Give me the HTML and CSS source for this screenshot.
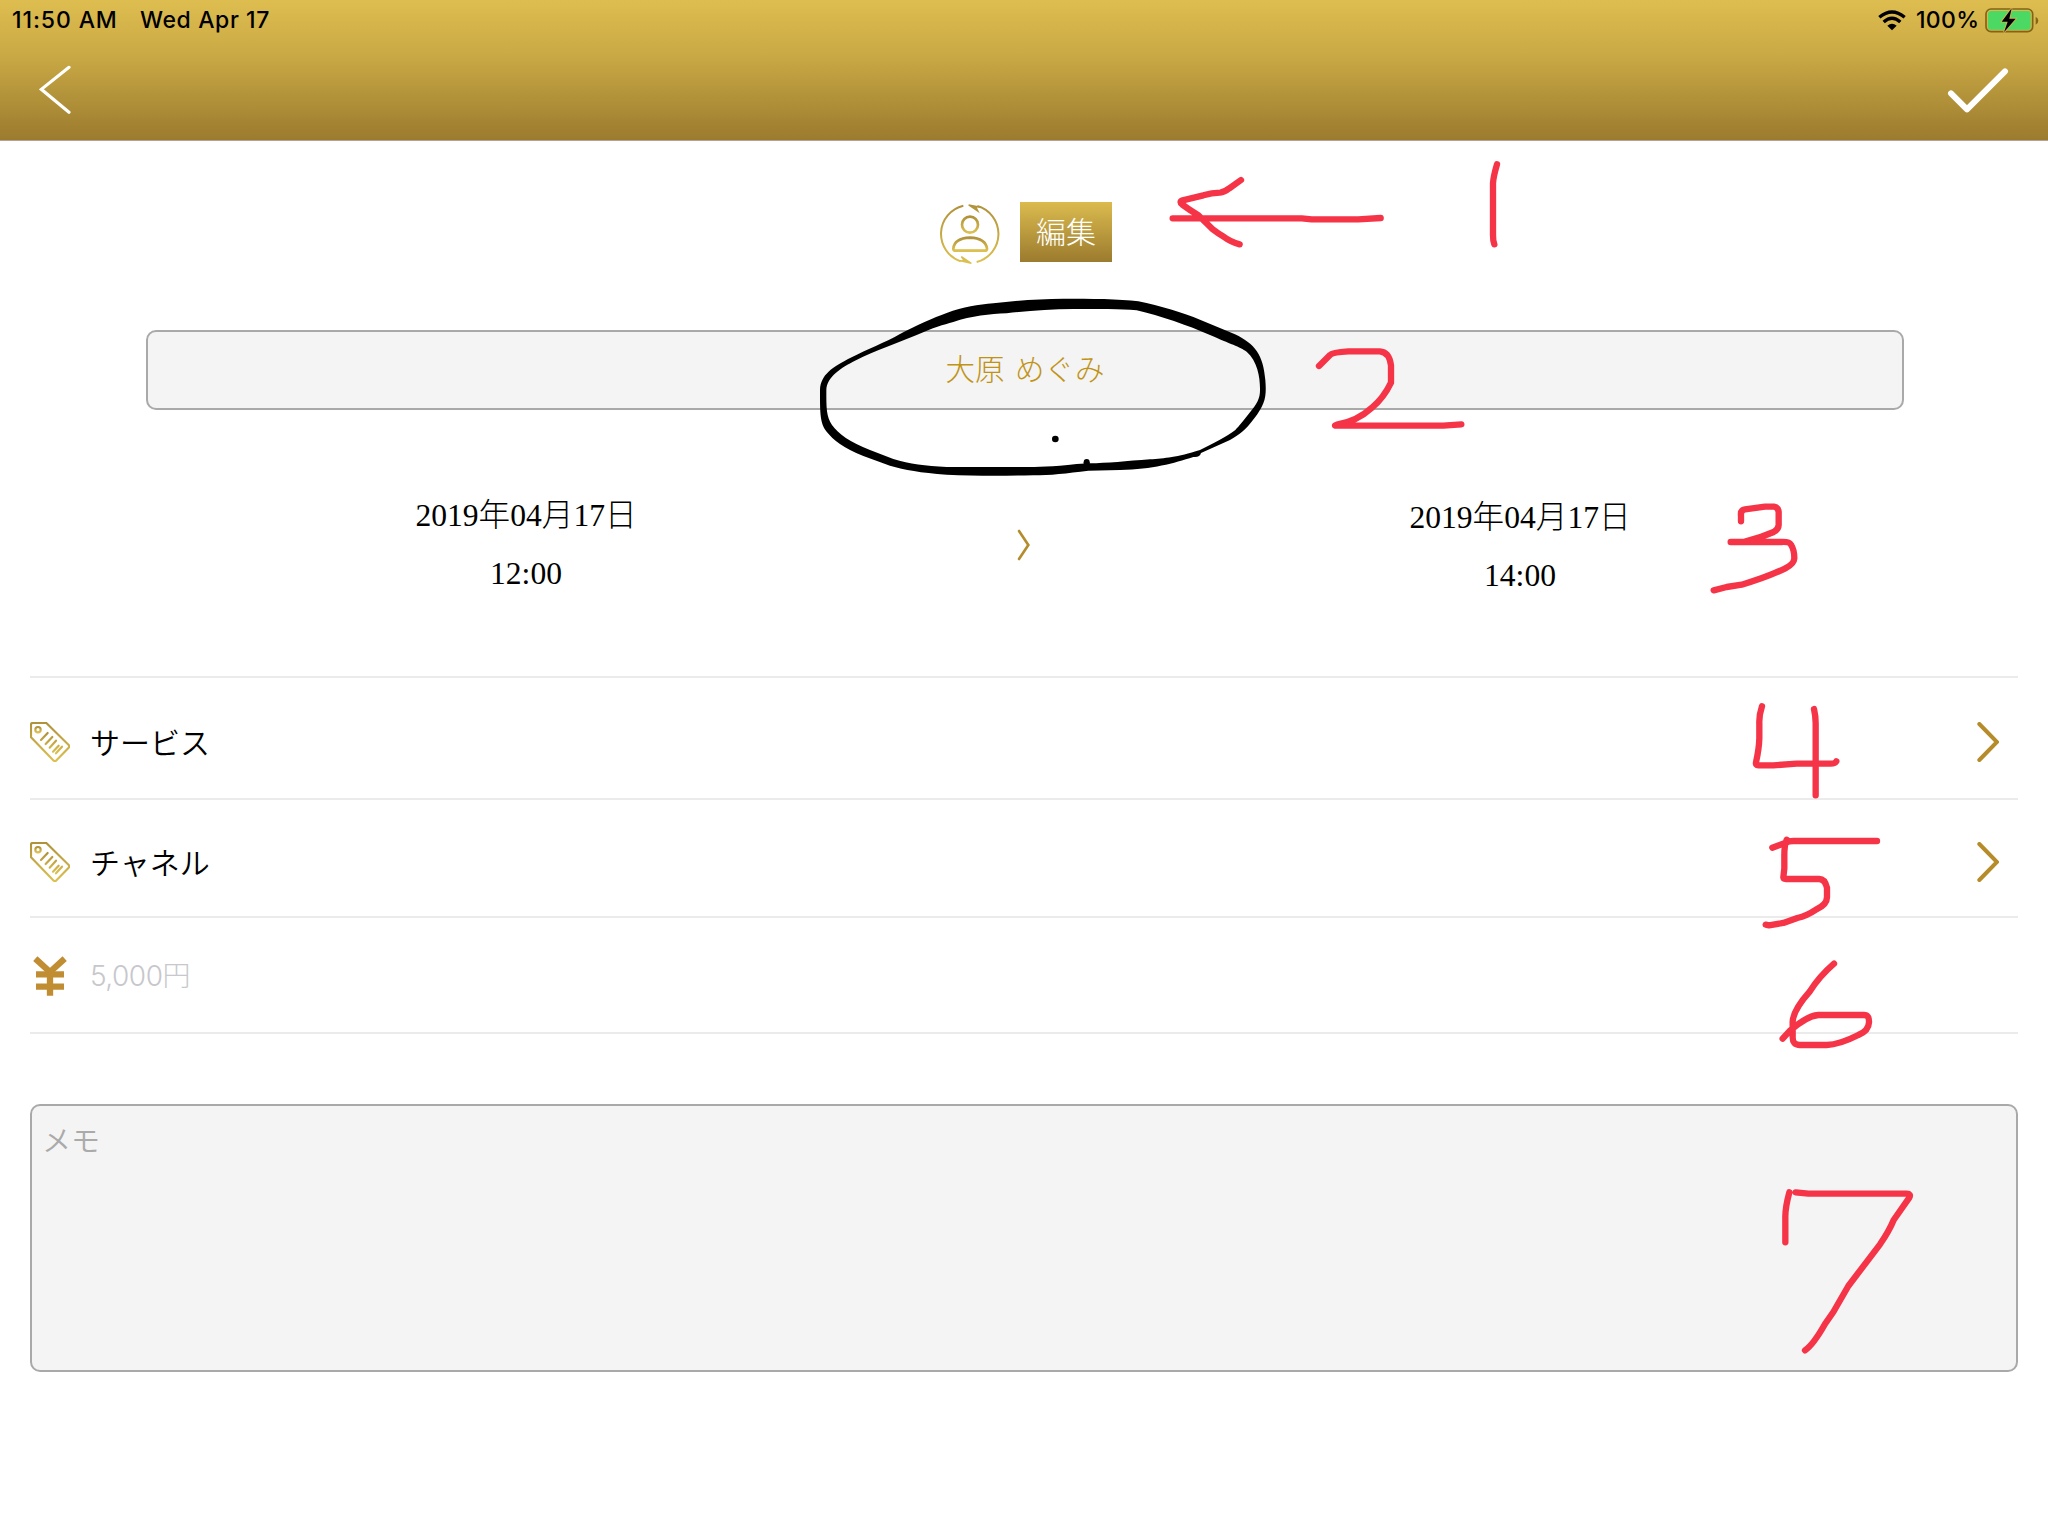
FILE: index.html
```html
<!DOCTYPE html>
<html lang="ja">
<head>
<meta charset="utf-8">
<title>予約編集</title>
<link rel="stylesheet" href="styles.css">
</head>
<body>
<svg class="defs" width="0" height="0">
  <defs>
    <linearGradient id="gold" x1="0" y1="0" x2="0" y2="1"><stop offset="0" stop-color="#b0923a"/><stop offset="1" stop-color="#dcc050"/></linearGradient>
    <symbol id="tag" viewBox="0 0 120 120">
      <path d="M8 3H49L117 70Q119 74 116 77L78 116Q75 119 71 116L3 46V8Q3 3 8 3Z"/>
      <circle cx="24" cy="23" r="8"/>
      <path d="M53 33L33 54M67 45L47 66M78 56L59 77M86 71L69 89M96 74L78 94" stroke-linecap="round"/>
    </symbol>
  </defs>
</svg>
<div class="screen">
  <header class="header">
    <div class="status">
      <span class="time">11:50 AM</span><span class="day">Wed Apr 17</span>
      <svg class="wifi" width="28" height="21" viewBox="0 0 84 63">
        <path d="M4 22Q42-10 80 22" fill="none" stroke="#000" stroke-width="10"/>
        <path d="M17 36Q42 13 67 36" fill="none" stroke="#000" stroke-width="10"/>
        <path d="M28 47Q42 35 56 47L42 61Z"/>
      </svg>
      <span class="percent">100%</span>
      <svg class="battery" width="54" height="26" viewBox="0 0 162 78">
        <rect x="3" y="6" width="140" height="68" rx="15" fill="none" stroke="#836316" stroke-width="5"/>
        <rect x="9" y="12" width="128" height="56" rx="9" fill="#4bd964"/>
        <path d="M152 29Q160 33 160 41Q160 49 152 53Z" fill="#836316"/>
        <path d="M80 4L50 44H68L57 76L92 35H73Z" stroke="#d9b34c" stroke-width="5" paint-order="stroke"/>
      </svg>
    </div>
    <nav class="nav">
      <svg class="back" width="32" height="50" viewBox="0 0 96 150"><path d="M90 7L7 73L90 142"/></svg>
      <svg class="done" width="62" height="46" viewBox="0 0 186 138"><path d="M12 79L60 127L174 13"/></svg>
    </nav>
  </header>

  <main class="content">
    <div class="customer">
      <svg class="avatar" width="60" height="60" viewBox="0 0 180 180" fill="none" stroke="url(#gold)" stroke-width="6">
        <path d="M70 5A87 87 0 0 0 62 172M110 174A87 87 0 0 0 112 6"/>
        <path d="M86 3L114 22L107 8L124 10Z M94 178L64 158L73 171L58 170Z" fill="url(#gold)" stroke-width="4"/>
        <g stroke-width="8"><circle cx="90" cy="62" r="24"/>
        <path d="M40 134Q43 103 90 101Q137 103 141 134Q141 140 134 140H47Q40 140 40 134Z"/></g>
      </svg>
      <button class="edit">編集</button>
    </div>

    <div class="name">大原 めぐみ</div>

    <div class="period">
      <div class="moment"><span>2019年04月17日</span><span>12:00</span></div>
      <svg class="until" width="14" height="32" viewBox="0 0 42 96"><path d="M6 6L34 48L6 90"/></svg>
      <div class="moment end"><span>2019年04月17日</span><span>14:00</span></div>
    </div>

    <div class="list">
      <div class="row service">
        <svg class="icon tag"><use href="#tag"/></svg><span class="label">サービス</span>
        <svg class="chevron" width="22" height="40" viewBox="0 0 66 120"><path d="M7 6L60 60L7 114"/></svg>
      </div>
      <div class="row channel">
        <svg class="icon tag"><use href="#tag"/></svg><span class="label">チャネル</span>
        <svg class="chevron" width="22" height="40" viewBox="0 0 66 120"><path d="M7 6L60 60L7 114"/></svg>
      </div>
      <div class="row price">
        <svg class="icon yen" viewBox="0 0 120 120"><path d="M16 8L60 48L104 8M60 44V119" /><path d="M18 55H102M18 92H102"/></svg>
        <span class="amount">5,000円</span>
      </div>
    </div>

    <div class="memo">メモ</div>
  </main>

  <svg class="ink" width="2048" height="1536" viewBox="0 0 2048 1536">
    <g transform="translate(800 280) scale(.33333)">
      <path fill-rule="evenodd" d="M60 330C62 285 95 262 155 232C200 208 255 188 300 162C350 136 400 113 440 99C490 80 535 74 580 70C650 62 720 56 790 56C870 56 960 56 1015 64C1080 78 1150 98 1200 119L1305 163C1365 192 1390 225 1396 300C1400 350 1396 370 1363 415C1335 453 1318 464 1290 480L1203 519Q1200 533 1180 531C1120 550 1060 568 960 570L865 572C800 580 750 586 700 586C600 588 520 588 440 584C360 578 315 570 270 557L190 528C130 503 100 480 80 455C60 430 60 400 60 330ZM79 330C80 290 125 262 165 242C230 210 290 190 350 165C400 143 430 134 460 126C515 108 570 102 620 100C690 92 750 87 820 87C900 88 960 86 1010 91C1080 107 1165 137 1230 165C1290 192 1320 200 1340 215C1372 243 1380 290 1380 325C1381 355 1372 370 1350 397C1330 423 1318 438 1306 450C1280 470 1240 490 1200 510C1130 532 1095 535 1050 538C980 543 920 550 869 550L830 552C740 562 700 561 640 561H440C375 558 330 552 280 537L210 510C150 487 115 462 96 435C79 410 79 385 79 330Z"/>
      <circle cx="766" cy="477" r="10"/><circle cx="860" cy="546" r="9"/><path d="M851 546H869V570H851Z"/>
    </g>
    <g class="red" transform="translate(1140 140) scale(.33333)">
      <path d="M98 235H485L515 238H655L722 234M303 120L268 145Q253 157 240 158Q215 158 190 166L128 181Q116 185 127 194Q150 211 175 226L218 268Q235 281 249 289Q273 307 299 313"/>
      <path d="M1071 73Q1060 110 1059 130V285Q1059 303 1063 313"/>
      <path d="M537 678L570 645Q577 637 625 634H719Q748 636 753 676V728Q731 774 696 803Q650 845 590 854Q580 857 590 857H910L964 853"/>
    </g>
    <g class="red" transform="translate(1380 480) scale(.33333)">
      <path d="M1083 124V107Q1081 90 1095 88L1155 80H1182Q1195 82 1196 96V135Q1195 149 1181 156Q1140 174 1095 185M1052 186H1205Q1228 185 1233 194Q1243 210 1243 235Q1242 252 1216 265Q1160 292 1085 314L1040 321L1001 331"/>
    </g>
    <g class="red" transform="translate(1700 660) scale(.33333)">
      <path d="M186 139Q177 166 178 190V235Q177 267 168 307Q166 316 175 316H220L290 311H388Q405 312 409 304M342 147Q347 168 347 190V406"/>
      <path d="M217 563L257 548Q267 543 280 543H531M260 539Q253 555 253 585V625L250 652Q250 657 258 657H355Q374 655 381 683V710Q382 733 348 749Q320 768 292 774L250 789L207 796L197 794"/>
      <path d="M402 911Q357 950 329 995Q280 1050 278 1085V1130Q277 1155 300 1155H380Q418 1154 475 1125Q506 1112 507 1087Q508 1065 492 1065H355Q320 1068 270 1112L248 1136"/>
    </g>
    <g class="red" transform="translate(1740 1150) scale(.33333)">
      <path d="M148 127Q135 175 136 205V277M167 127L205 131H500Q514 131 508 143L461 210Q448 242 420 283L325 408L280 486L255 522Q220 584 195 601"/>
    </g>
  </svg>
</div>
</body>
</html>
```
FILE: styles.css
```css
* { box-sizing: border-box; }
body { margin: 0; background: #fff; color: #000; font-family: "Liberation Serif", "Noto Sans CJK JP", serif; }
.defs { display: block; height: 0; }
.screen { position: relative; width: 2048px; height: 1536px; overflow: hidden; background: #fff; }

.header { height: 141px; background: linear-gradient(#debd50, #c9a944 40%, #9b7b2e); border-bottom: 1px solid #b9a097; }
.status { display: flex; align-items: center; height: 40px; padding: 0 9px 0 12px; font: 500 23px/40px Inter, sans-serif; }
.time { width: 128px; white-space: nowrap; letter-spacing: .9px; }
.day { letter-spacing: .6px; }
.wifi { margin-left: auto; margin-right: 10px; }
.percent { width: 62px; margin-right: 7px; white-space: nowrap; letter-spacing: .3px; }
.battery { flex: none; }
.nav { display: flex; justify-content: space-between; align-items: center; height: 100px; padding: 0 39px; }
.nav svg { fill: none; stroke: #fff; stroke-linecap: round; }
.back { stroke-width: 9.5; }
.done { stroke-width: 18; stroke-linejoin: round; }

.content { padding: 61px 30px 0; }
.customer { display: flex; justify-content: center; align-items: center; gap: 20px; height: 60px; padding-left: 4px; }
.avatar { margin-top: 4px; }
.edit { width: 92px; height: 60px; padding: 0 0 4px; border: 0; background: linear-gradient(#dbbb4e, #9b7b2e); color: #fff; font: 300 30px/54px "Noto Sans CJK JP", sans-serif; }
.name { height: 80px; margin: 68px 114px 0 116px; border: 2px solid #a9a9a9; border-radius: 10px; background: #f4f4f4; color: #c09315; text-align: center; font: 300 29.5px/70px "Noto Sans CJK JP", sans-serif; word-spacing: 4px; }
.period { display: flex; justify-content: space-between; height: 266px; padding: 77px 0 0; }
.moment { display: flex; flex-direction: column; width: 990px; align-items: center; font-size: 31.6px; font-weight: 300; line-height: 58px; }
.moment:first-child { padding-left: 5px; }
.moment.end { padding: 2px 9px 0 0; }
.until { flex: none; margin-top: 42px; fill: none; stroke: #b38d2d; stroke-width: 8; stroke-linecap: round; }

.list { border-top: 2px solid #ebebeb; }
.row { display: flex; align-items: center; border-bottom: 2px solid #ebebeb; padding: 8px 19px 0 0; }
.service { height: 122px; }
.channel { height: 118px; }
.price { height: 116px; padding-top: 1px; }
.icon { width: 40px; height: 40px; margin-right: 20px; fill: none; }
.tag { stroke: url(#gold); stroke-width: 6.5; }
.yen { stroke: #c08d33; stroke-width: 19; stroke-linejoin: round; overflow: visible; }
.label { padding-bottom: 3px; font: 350 30px/40px "Noto Sans CJK JP", sans-serif; }
.amount { font: 300 28px/40px Inter, "Noto Sans CJK JP", sans-serif; letter-spacing: -.5px; color: #c7c7cc; }
.chevron { margin-left: auto; fill: none; stroke: #b68c2b; stroke-width: 12; stroke-linecap: round; }
.memo { height: 268px; margin-top: 70px; padding: 13px 10px; border: 2px solid #a9a9a9; border-radius: 10px; background: #f4f4f4; color: #aaa; font: 350 29px/40px "Noto Sans CJK JP", sans-serif; }

.ink { position: absolute; left: 0; top: 0; pointer-events: none; }
.red { fill: none; stroke: #f63448; stroke-width: 19; stroke-linecap: round; stroke-linejoin: round; }
```
